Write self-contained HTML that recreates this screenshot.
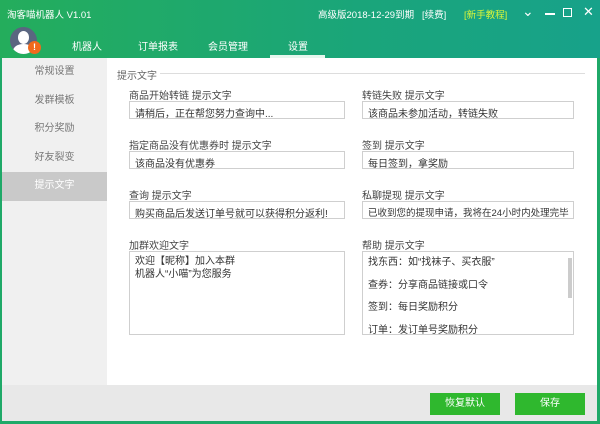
<!DOCTYPE html>
<html><head><meta charset="utf-8"><style>
*{margin:0;padding:0;box-sizing:border-box}
body{width:600px;height:424px;overflow:hidden;font-family:"Liberation Sans","Noto Sans CJK SC",sans-serif;font-size:10px;color:#333;background:#1fa968;position:relative}
.hdr{position:absolute;left:0;top:0;width:600px;height:58px;background:linear-gradient(90deg,#24ad5c,#1aa57a 60%,#17a28a)}
.t{position:absolute;color:#fff;font-size:10px;white-space:nowrap}
.side{position:absolute;left:2px;top:58px;width:105px;height:327px;background:#f0f0f0}
.side div{height:28.5px;line-height:28px;text-align:center;color:#777;font-size:10px}
.side .sel{background:#c9c9c9;color:#fff}
.main{position:absolute;left:107px;top:58px;width:490px;height:327px;background:#fff}
.bot{position:absolute;left:2px;top:385px;width:595px;height:36px;background:#e8e8e8}
.lbl{position:absolute;font-size:10px;color:#444;white-space:nowrap}
.in{position:absolute;border:1px solid #cfcfcf;background:#fff;font-size:10px;color:#333;padding:3px 5px;white-space:nowrap;overflow:hidden}
.btn{position:absolute;top:393px;height:22px;background:#2fb82e;color:#fff;font-size:10px;text-align:center;line-height:22px}
</style></head><body>
<div class="hdr"></div>
<div class="t" style="left:7px;top:7px;font-size:9.5px">淘客喵机器人 V1.01</div>
<div class="t" style="left:318px;top:7px;font-size:9.5px">高级版2018-12-29到期</div>
<div class="t" style="left:422px;top:7px;font-size:9.5px">[续费]</div>
<div class="t" style="left:464px;top:7px;color:#d8f53a;font-size:9.5px">[新手教程]</div>
<div class="t" style="left:522px;top:3px;font-size:14px">⌄</div>
<div style="position:absolute;left:545px;top:13px;width:10px;height:1.5px;background:#fff"></div>
<div style="position:absolute;left:563px;top:8px;width:9px;height:9px;border:1px solid #fff"></div>
<div class="t" style="left:583px;top:4px;font-size:13px">✕</div>
<div style="position:absolute;left:10px;top:27px;width:27px;height:27px;border-radius:50%;background:#5a6680;overflow:hidden"><div style="position:absolute;left:8px;top:4px;width:11px;height:13px;border-radius:50%;background:#fff"></div><div style="position:absolute;left:3px;top:17px;width:21px;height:14px;border-radius:50%;background:#fff"></div></div>
<div style="position:absolute;left:28px;top:41px;width:13px;height:13px;border-radius:50%;background:#f06a1c;color:#fff;font-size:9px;text-align:center;line-height:13px;font-weight:bold">!</div>
<div class="t" style="left:72px;top:38px">机器人</div>
<div class="t" style="left:138px;top:38px">订单报表</div>
<div class="t" style="left:208px;top:38px">会员管理</div>
<div class="t" style="left:288px;top:38px">设置</div>
<div style="position:absolute;left:270px;top:55px;width:55px;height:3px;background:#e6f7ee"></div>
<div class="side"><div>常规设置</div><div>发群模板</div><div>积分奖励</div><div>好友裂变</div><div class="sel">提示文字</div></div>
<div class="main"></div>
<div class="lbl" style="left:117px;top:67px;color:#666">提示文字</div>
<div style="position:absolute;left:160px;top:73px;width:425px;height:1px;background:#ddd"></div>
<div class="lbl" style="left:129px;top:87px">商品开始转链 提示文字</div>
<div class="in" style="left:129px;top:101px;width:216px;height:18px">请稍后，正在帮您努力查询中...</div>
<div class="lbl" style="left:129px;top:137px">指定商品没有优惠券时 提示文字</div>
<div class="in" style="left:129px;top:151px;width:216px;height:18px">该商品没有优惠券</div>
<div class="lbl" style="left:129px;top:187px">查询 提示文字</div>
<div class="in" style="left:129px;top:201px;width:216px;height:18px">购买商品后发送订单号就可以获得积分返利!</div>
<div class="lbl" style="left:129px;top:237px">加群欢迎文字</div>
<div class="in" style="left:129px;top:251px;width:216px;height:84px;white-space:normal;line-height:13px">欢迎【昵称】加入本群<br>机器人“小喵”为您服务</div>
<div class="lbl" style="left:362px;top:87px">转链失败 提示文字</div>
<div class="in" style="left:362px;top:101px;width:212px;height:18px">该商品未参加活动，转链失败</div>
<div class="lbl" style="left:362px;top:137px">签到 提示文字</div>
<div class="in" style="left:362px;top:151px;width:212px;height:18px">每日签到，拿奖励</div>
<div class="lbl" style="left:362px;top:187px">私聊提现 提示文字</div>
<div class="in" style="left:362px;top:201px;width:212px;height:18px;font-size:9.5px">已收到您的提现申请，我将在24小时内处理完毕</div>
<div class="lbl" style="left:362px;top:237px">帮助 提示文字</div>
<div class="in" style="left:362px;top:251px;width:212px;height:84px;white-space:normal;line-height:22.5px;padding-top:0">找东西：如“找袜子、买衣服”<br>查券：分享商品链接或口令<br>签到：每日奖励积分<br>订单：发订单号奖励积分</div>
<div style="position:absolute;left:568px;top:258px;width:4px;height:40px;background:#ccc"></div>
<div class="bot"></div>
<div class="btn" style="left:430px;width:70px">恢复默认</div>
<div class="btn" style="left:515px;width:70px">保存</div>
</body></html>
